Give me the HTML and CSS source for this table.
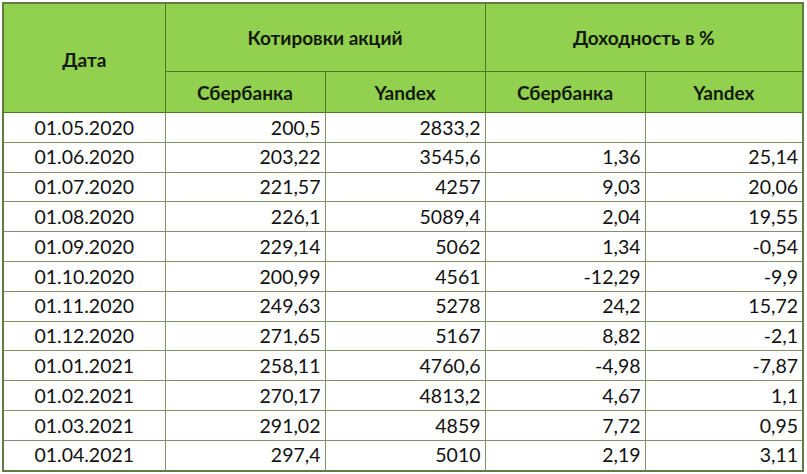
FILE: index.html
```html
<!DOCTYPE html>
<html lang="ru">
<head>
<meta charset="utf-8">
<link rel="stylesheet" href="styles.css">
</head>
<body>
<table class="grid">
  <colgroup>
    <col class="c1"><col class="c2"><col class="c3"><col class="c4"><col class="c5">
  </colgroup>
  <thead>
    <tr class="h1">
      <th rowspan="2" class="date-h">Дата</th>
      <th colspan="2">Котировки акций</th>
      <th colspan="2">Доходность в %</th>
    </tr>
    <tr class="h2">
      <th>Сбербанка</th>
      <th>Yandex</th>
      <th>Сбербанка</th>
      <th>Yandex</th>
    </tr>
  </thead>
  <tbody>
    <tr><td class="d">01.05.2020</td><td>200,5</td><td>2833,2</td><td></td><td></td></tr>
    <tr><td class="d">01.06.2020</td><td>203,22</td><td>3545,6</td><td>1,36</td><td>25,14</td></tr>
    <tr><td class="d">01.07.2020</td><td>221,57</td><td>4257</td><td>9,03</td><td>20,06</td></tr>
    <tr><td class="d">01.08.2020</td><td>226,1</td><td>5089,4</td><td>2,04</td><td>19,55</td></tr>
    <tr><td class="d">01.09.2020</td><td>229,14</td><td>5062</td><td>1,34</td><td>-0,54</td></tr>
    <tr><td class="d">01.10.2020</td><td>200,99</td><td>4561</td><td>-12,29</td><td>-9,9</td></tr>
    <tr><td class="d">01.11.2020</td><td>249,63</td><td>5278</td><td>24,2</td><td>15,72</td></tr>
    <tr><td class="d">01.12.2020</td><td>271,65</td><td>5167</td><td>8,82</td><td>-2,1</td></tr>
    <tr><td class="d">01.01.2021</td><td>258,11</td><td>4760,6</td><td>-4,98</td><td>-7,87</td></tr>
    <tr><td class="d">01.02.2021</td><td>270,17</td><td>4813,2</td><td>4,67</td><td>1,1</td></tr>
    <tr><td class="d">01.03.2021</td><td>291,02</td><td>4859</td><td>7,72</td><td>0,95</td></tr>
    <tr><td class="d">01.04.2021</td><td>297,4</td><td>5010</td><td>2,19</td><td>3,11</td></tr>
  </tbody>
</table>
</body>
</html>
```
FILE: styles.css
```css
html, body {
  margin: 0;
  padding: 0;
  background: #ffffff;
}
body {
  padding: 2px 0 0 2px;
  font-family: Lato, "Open Sans", "Liberation Sans", sans-serif;
  color: #111;
}
.grid {
  border-collapse: collapse;
  table-layout: fixed;
  width: 802px;
  border: 2px solid #5e7d45;
}
.c1 { width: 162px; }
.c2 { width: 160px; }
.c3 { width: 160px; }
.c4 { width: 160px; }
.c5 { width: 158px; }
th {
  background: #92d050;
  font-weight: bold;
  font-size: 19px;
  color: #121a0c;
  border: 1px solid #4d7a26;
  text-align: center;
  padding: 0;
}
.h1 th { height: 67px; }
.h1 th.date-h { padding-top: 2px; }
.h2 th { height: 40px; }
td {
  font-size: 19.5px;
  height: 28.8px;
  border: 1px solid #7d9468;
  text-align: right;
  padding: 0 4px 0 0;
  line-height: 1;
  color: #111;
}
td.d {
  text-align: center;
  padding: 0;
}
```
